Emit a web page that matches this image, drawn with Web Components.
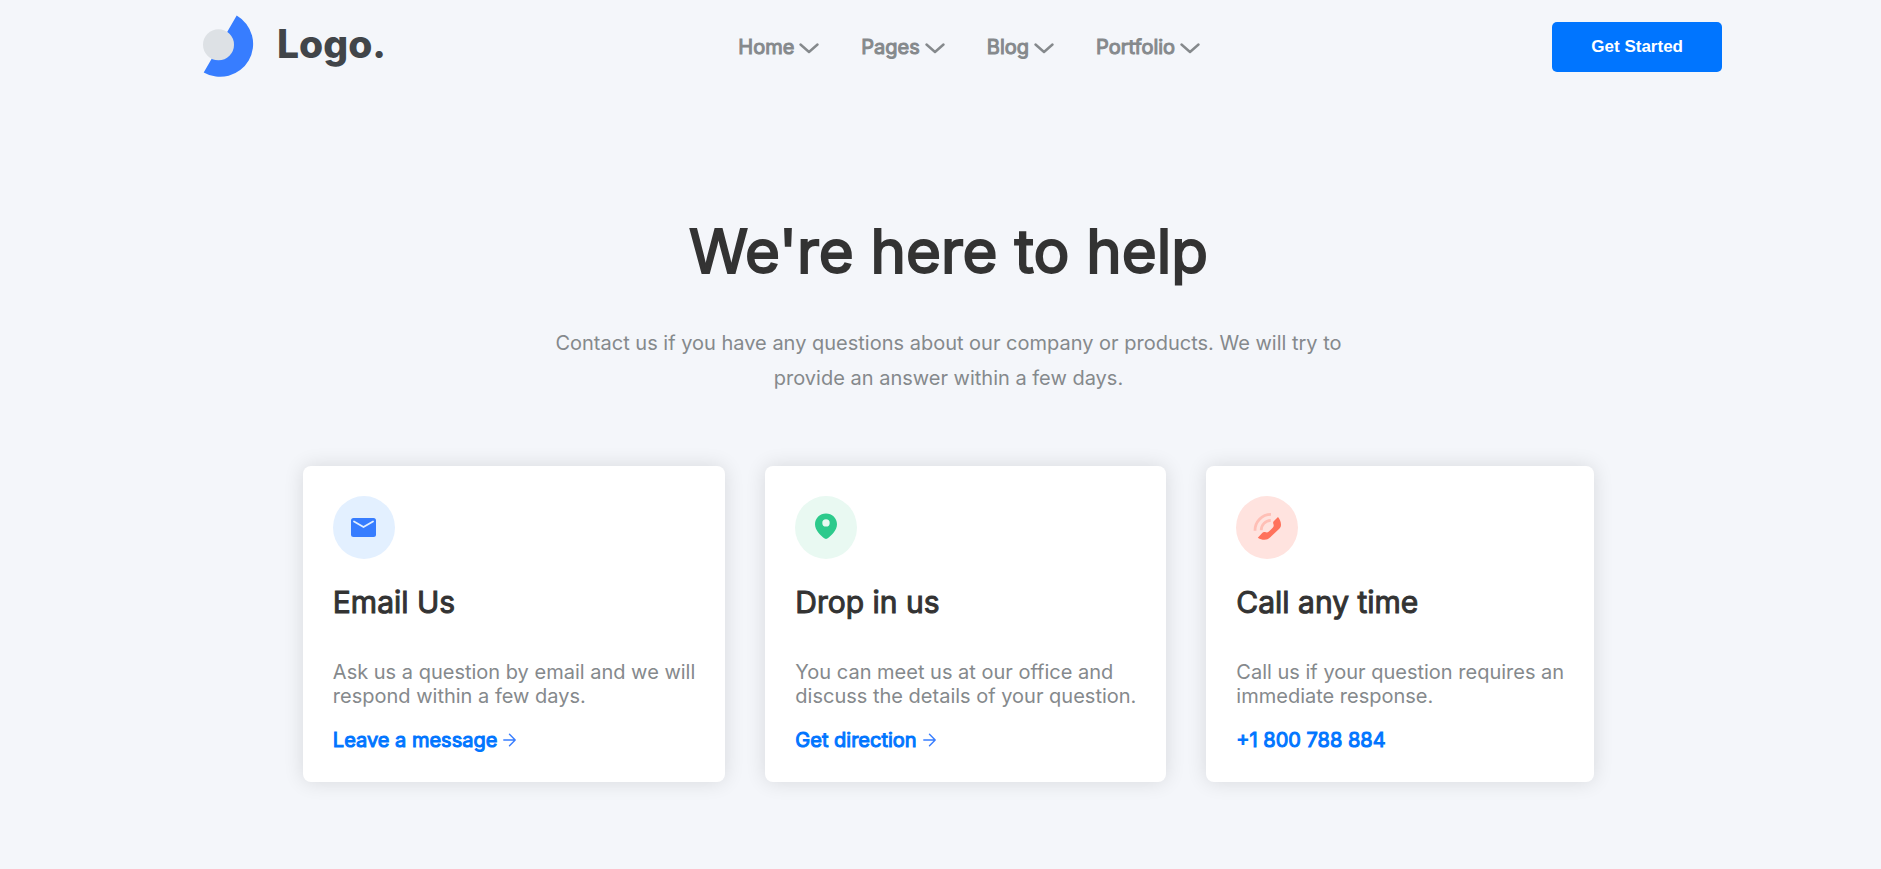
<!DOCTYPE html>
<html lang="en">
<head>
<meta charset="utf-8">
<meta name="viewport" content="width=device-width, initial-scale=1">
<title>Contact us</title>
<style>
  body {
    margin: 0;
    min-height: 100vh;
    background: #f4f6fa;
    font-family: Inter, "Liberation Sans", sans-serif;
    font-size: 20px;
    line-height: 24px;
    --ink: #333;
    --muted: #85898c;
    --blue: #0075ff;
  }
</style>
</head>
<body>
<site-header>
  <site-logo slot="brand"></site-logo>
  <nav-item href="#home">Home</nav-item>
  <nav-item href="#pages">Pages</nav-item>
  <nav-item href="#blog">Blog</nav-item>
  <nav-item href="#portfolio">Portfolio</nav-item>
  <primary-button slot="action">Get Started</primary-button>
</site-header>
<help-section>
  <span slot="title">We're here to help</span>
  <span slot="lead">Contact us if you have any questions about our company or products. We will try to provide an answer within a few days.</span>
  <contact-card icon="mail" href="#message" arrow>
    <span slot="title">Email Us</span>
    Ask us a question by email and we will<br>respond within a few days.
    <span slot="link">Leave a message</span>
  </contact-card>
  <contact-card icon="pin" href="#direction" arrow>
    <span slot="title">Drop in us</span>
    You can meet us at our office and<br>discuss the details of your question.
    <span slot="link">Get direction</span>
  </contact-card>
  <contact-card icon="phone" href="tel:+1800788884">
    <span slot="title">Call any time</span>
    Call us if your question requires an<br>immediate response.
    <span slot="link">+1 800 788 884</span>
  </contact-card>
</help-section>

<script>
const define = (name, render) => customElements.define(name, class extends HTMLElement {
  constructor() {
    super();
    this.attachShadow({ mode: "open" }).innerHTML = render(this);
  }
});

define("site-logo", () => `
  <style>
    :host { display: block; align-self: flex-start; }
    a { display: flex; align-items: flex-start; gap: 24px; color: #414549; text-decoration: none;
        font-size: 39px; line-height: 58px; font-weight: 800; }
    svg { display: block; overflow: visible; }
  </style>
  <a href="#">
    <svg width="50" height="62" viewBox="0 0 50 62" aria-hidden="true">
      <path d="M33.7 .4A32.900 32.900 0 0 1 .7 57.4Z" fill="#377dff"/>
      <circle cx="15.5" cy="29.7" r="15.5" fill="#dde1e5"/>
    </svg>
    <span>Logo.</span>
  </a>`);

define("nav-item", el => `
  <style>
    :host { display: block; }
    a { display: flex; align-items: center; gap: 5px; color: var(--muted); text-decoration: none;
      -webkit-text-stroke: 1px currentColor; }
    svg { display: block; }
  </style>
  <a href="${el.getAttribute("href")}"><slot></slot>
    <svg width="20" height="20" viewBox="0 0 20 20" fill="none" stroke="currentColor" stroke-width="2.4" stroke-linecap="round" stroke-linejoin="round" aria-hidden="true"><path d="M1.500 7.500 10 15l8.500-7.500"/></svg>
  </a>`);

define("primary-button", () => `
  <style>
    :host { display: block; }
    button { display: block; padding: 13px 39px; border: 0; border-radius: 5px; background: var(--blue);
      color: #fff; font: 700 17px/24px Arial, "Liberation Sans", sans-serif; cursor: pointer; }
  </style>
  <button type="button"><slot></slot></button>`);

define("site-header", () => `
  <style>
    :host { display: block; }
    header { display: flex; align-items: center; justify-content: space-between; min-height: 64px; padding: 15px 159px 15px 203px; }
    nav { display: flex; gap: 42px; }
  </style>
  <header><slot name="brand"></slot><nav><slot></slot></nav><slot name="action"></slot></header>`);

define("help-section", () => `
  <style>
    :host { display: block; }
    main { display: flex; flex-direction: column; align-items: center; padding: 121px 0 60px 16px; }
    h1 { margin: 0 0 38px; color: var(--ink); font-size: 60px; line-height: 73px; font-weight: 400;
      -webkit-text-stroke: 2px currentColor; }
    p { margin: 0 0 70px; max-width: 800px; color: var(--muted); line-height: 35px; text-align: center; }
    section { display: flex; gap: 40px; }
  </style>
  <main>
    <h1><slot name="title"></slot></h1>
    <p><slot name="lead"></slot></p>
    <section><slot></slot></section>
  </main>`);

const icons = {
  mail: `<ellipse cx="31" cy="31.500" rx="31" ry="31.500" fill="#e3f0ff"/>
    <rect x="18" y="22" width="25" height="19" rx="2.500" fill="#377dff"/>
    <path d="m21 25.500 9.500 5.500 9.500-5.500" fill="none" stroke="#e3f0ff" stroke-width="1.800" stroke-linecap="round"/>`,
  pin: `<ellipse cx="31" cy="31.500" rx="31" ry="31.500" fill="#e9f9f2"/>
    <path fill-rule="evenodd" d="M31 17.500c6 0 11 4.600 11 10.800 0 6.200-6 11.800-9.700 14.200-.9.600-1.700.6-2.600 0C26 40.100 20 34.500 20 28.300c0-6.200 5-10.800 11-10.800Zm0 5.700a3.700 3.700 0 1 0 0 7.400 3.700 3.700 0 0 0 0-7.400Z" fill="#2dca8c"/>`,
  phone: `<ellipse cx="31" cy="31.500" rx="31" ry="31.500" fill="#ffe3df"/>
    <path d="M19 34.800A16 16 0 0 1 35 18.300M25.200 34.300A10 10 0 0 1 34.800 24.300" fill="none" stroke="#ffbfb6" stroke-width="2.800"/>
    <path d="M42 21c1.400 2 3 4.400 3 7.400 0 2.200-.5 3-2 4.600l-9 8.600c-1.800 1.700-3.200 2.200-5.500 2.200-2.600 0-4.400-.6-6.700-2.100l4.400-4.700c1-1.100 1.700-1.300 2.800-.9 1.700.7 2.600.6 3.900-.6l3.600-3.500c1.300-1.300 1.500-2.300.9-3.900-.5-1.300-.4-2 .6-3Z" fill="#ff725c"/>`
};

define("contact-card", el => `
  <style>
    :host { display: block; }
    article { padding: 30px; border-radius: 8px; background: #fff; box-shadow: 0 0 20px rgba(0, 0, 0, .12); white-space: nowrap; }
    svg { display: block; }
    h2 { margin: 25px 0 40px; color: var(--ink); font-size: 30px; line-height: 36px; font-weight: 400;
      -webkit-text-stroke: 1px currentColor; }
    p { margin: 0 0 20px; color: var(--muted); }
    a { display: flex; align-items: center; gap: 6px; color: var(--blue); text-decoration: none;
      -webkit-text-stroke: 1px currentColor; }
  </style>
  <article>
    <svg width="62" height="63" viewBox="0 0 62 63" aria-hidden="true">${icons[el.getAttribute("icon")]}</svg>
    <h2><slot name="title"></slot></h2>
    <p><slot></slot></p>
    <a href="${el.getAttribute("href")}"><slot name="link"></slot>${el.hasAttribute("arrow") ? `
      <svg width="13" height="14" viewBox="0 0 13 14" fill="none" stroke="#377dff" stroke-width="1.400" stroke-linecap="round" stroke-linejoin="round" aria-hidden="true"><path d="M.8 7h11.400M6.500 1.300 12.200 7l-5.700 5.700"/></svg>` : ""}</a>
  </article>`);
</script>
</body>
</html>
